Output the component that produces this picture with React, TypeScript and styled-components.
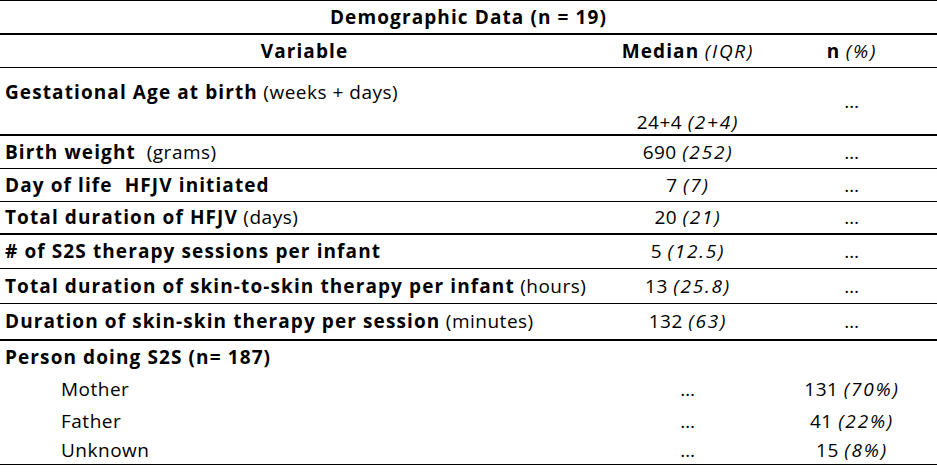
import React from "react";
import styled, { createGlobalStyle } from "styled-components";

const Global = createGlobalStyle`
  html, body { margin: 0; padding: 0; background: #ffffff; }
  body { font-family: "Open Sans", Lato, sans-serif; color: #000; }
`;

const Table = styled.div`
  width: 937px;
  display: flex;
  flex-direction: column;
  border-top: 1px solid #000;
  font-size: 19px;
  letter-spacing: 0.5px;
  line-height: 1.2;
`;

const Row = styled.div<{ $h: number; $line?: 0 | 1 | 2 }>`
  box-sizing: border-box;
  height: ${(p) => p.$h}px;
  display: grid;
  grid-template-columns: 609px 158px 170px;
  border-bottom: ${(p) => (p.$line ? `${p.$line}px solid #000` : "none")};
`;

const TitleRow = styled(Row)`
  grid-template-columns: 1fr;
`;

const Cell = styled.div<{ $align?: "left" | "center"; $v?: "start" | "center" | "end"; $indent?: number; $top?: number }>`
  display: flex;
  align-items: ${(p) => (p.$v === "start" ? "flex-start" : p.$v === "end" ? "flex-end" : "center")};
  justify-content: ${(p) => (p.$align === "left" ? "flex-start" : "center")};
  padding: ${(p) => p.$top || 0}px 5px 0 ${(p) => 5 + (p.$indent || 0)}px;
  white-space: nowrap;
`;

const B = styled.b`
  font-weight: 700;
  letter-spacing: 1.1px;
`;

const I = styled.i`
  font-style: italic;
  letter-spacing: 1.8px;
`;

type Data = {
  label: React.ReactNode;
  median: React.ReactNode;
  n: React.ReactNode;
  h: number;
  line?: 0 | 1 | 2;
};

const rows: Data[] = [
  { label: <><B>Birth weight</B>&nbsp; (grams)</>, median: <>690 <I>(252)</I></>, n: "…", h: 33, line: 1 },
  { label: <B>Day of life&nbsp; HFJV initiated</B>, median: <>7 <I>(7)</I></>, n: "…", h: 33, line: 1 },
  { label: <><B>Total duration of HFJV</B> (days)</>, median: <>20 <I>(21)</I></>, n: "…", h: 33, line: 2 },
  { label: <B># of S2S therapy sessions per infant</B>, median: <>5 <I>(12.5)</I></>, n: "…", h: 34, line: 1 },
  { label: <><B>Total duration of skin-to-skin therapy per infant</B> (hours)</>, median: <>13 <I>(25.8)</I></>, n: "…", h: 35, line: 1 },
  { label: <><B>Duration of skin-skin therapy per session</B> (minutes)</>, median: <>132 <I>(63)</I></>, n: "…", h: 37, line: 2 },
];

const persons: Data[] = [
  { label: "Mother", median: "…", n: <>131 <I>(70%)</I></>, h: 32 },
  { label: "Father", median: "…", n: <>41 <I>(22%)</I></>, h: 32 },
  { label: "Unknown", median: "…", n: <>15 <I>(8%)</I></>, h: 28, line: 1 },
];

export default function App() {
  return (
    <>
      <Global />
      <Table>
        <TitleRow $h={34} $line={2}>
          <Cell><B>Demographic Data (n = 19)</B></Cell>
        </TitleRow>
        <Row $h={33} $line={1}>
          <Cell><B>Variable</B></Cell>
          <Cell><B>Median</B>&nbsp;<I>(IQR)</I></Cell>
          <Cell><B>n</B>&nbsp;<I>(%)</I></Cell>
        </Row>
        <Row $h={68} $line={2}>
          <Cell $align="left" $v="start" $top={13}><span><B>Gestational Age at birth</B> (weeks + days)</span></Cell>
          <Cell $v="end"><span>24+4 <I>(2+4)</I></span></Cell>
          <Cell>…</Cell>
        </Row>
        {rows.map((r, i) => (
          <Row key={i} $h={r.h} $line={r.line}>
            <Cell $align="left"><span>{r.label}</span></Cell>
            <Cell><span>{r.median}</span></Cell>
            <Cell>{r.n}</Cell>
          </Row>
        ))}
        <Row $h={32}>
          <Cell $align="left"><B>Person doing S2S (n= 187)</B></Cell>
          <Cell />
          <Cell />
        </Row>
        {persons.map((r, i) => (
          <Row key={i} $h={r.h} $line={r.line}>
            <Cell $align="left" $indent={56}>{r.label}</Cell>
            <Cell>{r.median}</Cell>
            <Cell><span>{r.n}</span></Cell>
          </Row>
        ))}
      </Table>
    </>
  );
}
